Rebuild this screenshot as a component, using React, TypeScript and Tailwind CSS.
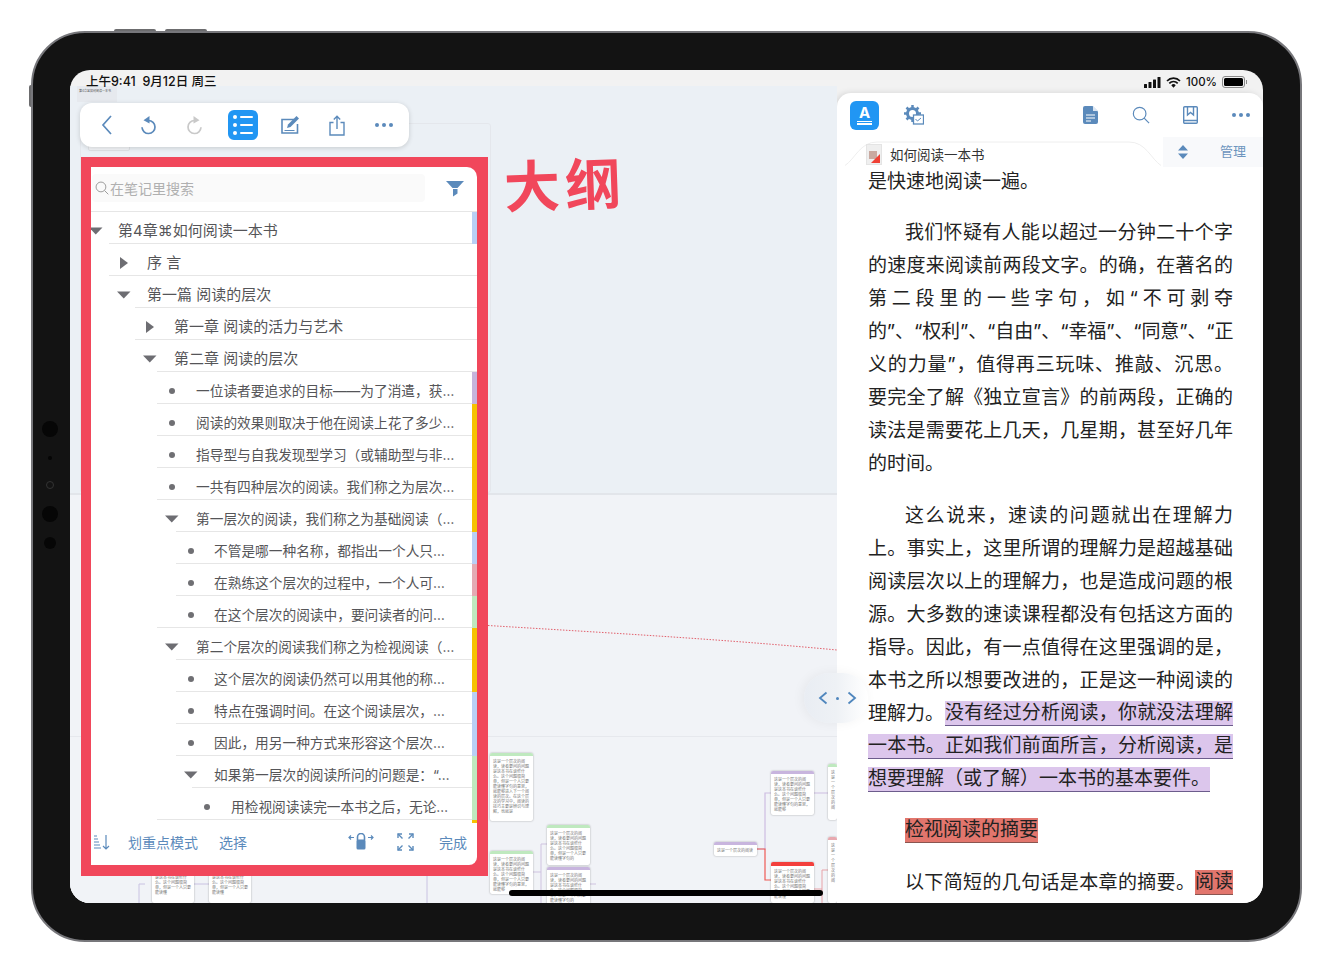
import React from 'react';
import { clsx } from 'clsx';

const BLUE = '#5b8abb';

type OutlineRow = {
  level: number;
  icon: 'down' | 'right' | 'dot';
  sep: string;
  bar?: string;
  text: string;
};

const indent: Record<number, string> = {
  0: 'ml-[-3px]',
  1: 'ml-[25px]',
  2: 'ml-[51px]',
  3: 'ml-[73px]',
  4: 'ml-[92px]',
  5: 'ml-[108px]',
};

const textStyle: Record<number, string> = {
  0: 'ml-[14px] text-[15px]',
  1: 'ml-[15px] text-[15px]',
  2: 'ml-[16px] text-[15px]',
  3: 'ml-[16px] text-[13.7px]',
  4: 'ml-[15px] text-[13.7px]',
  5: 'ml-[16px] text-[13.7px]',
};

const rows: OutlineRow[] = [
  { level: 0, icon: 'down', sep: 'left-[18px]', bar: 'bg-[#b9cff5]', text: '第4章⌘如何阅读一本书' },
  { level: 1, icon: 'right', sep: 'left-[18px]', text: '序 言' },
  { level: 1, icon: 'down', sep: 'left-[44px]', text: '第一篇 阅读的层次' },
  { level: 2, icon: 'right', sep: 'left-[44px]', text: '第一章 阅读的活力与艺术' },
  { level: 2, icon: 'down', sep: 'left-[66px]', text: '第二章 阅读的层次' },
  { level: 3, icon: 'dot', sep: 'left-[66px]', bar: 'bg-[#c6b4dc]', text: '一位读者要追求的目标——为了消遣，获…' },
  { level: 3, icon: 'dot', sep: 'left-[66px]', bar: 'bg-[#f6c200]', text: '阅读的效果则取决于他在阅读上花了多少…' },
  { level: 3, icon: 'dot', sep: 'left-[66px]', bar: 'bg-[#f6c200]', text: '指导型与自我发现型学习（或辅助型与非…' },
  { level: 3, icon: 'dot', sep: 'left-[66px]', bar: 'bg-[#f6c200]', text: '一共有四种层次的阅读。我们称之为层次…' },
  { level: 3, icon: 'down', sep: 'left-[85px]', bar: 'bg-[#f6c200]', text: '第一层次的阅读，我们称之为基础阅读（…' },
  { level: 4, icon: 'dot', sep: 'left-[85px]', bar: 'bg-[#b9cff5]', text: '不管是哪一种名称，都指出一个人只…' },
  { level: 4, icon: 'dot', sep: 'left-[85px]', bar: 'bg-[#e4aab3]', text: '在熟练这个层次的过程中，一个人可…' },
  { level: 4, icon: 'dot', sep: 'left-[66px]', bar: 'bg-[#bfe9bf]', text: '在这个层次的阅读中，要问读者的问…' },
  { level: 3, icon: 'down', sep: 'left-[85px]', bar: 'bg-[#f6c200]', text: '第二个层次的阅读我们称之为检视阅读（…' },
  { level: 4, icon: 'dot', sep: 'left-[85px]', bar: 'bg-[#f6c200]', text: '这个层次的阅读仍然可以用其他的称…' },
  { level: 4, icon: 'dot', sep: 'left-[85px]', bar: 'bg-[#b9cff5]', text: '特点在强调时间。在这个阅读层次，…' },
  { level: 4, icon: 'dot', sep: 'left-[85px]', bar: 'bg-[#b9cff5]', text: '因此，用另一种方式来形容这个层次…' },
  { level: 4, icon: 'down', sep: 'left-[101px]', bar: 'bg-[#bfe9bf]', text: '如果第一层次的阅读所问的问题是：“…' },
  { level: 5, icon: 'dot', sep: 'left-[66px]', bar: 'bg-[#bfe9bf]', text: '用检视阅读读完一本书之后，无论…' },
];

function RowIcon({ icon }: { icon: OutlineRow['icon'] }) {
  if (icon === 'dot') return <span className="h-[6px] w-[6px] rounded-full bg-[#6f6f73]" />;
  return (
    <svg width="14" height="14" viewBox="0 0 14 14">
      {icon === 'down' ? <path d="M0 3.500h13.500L6.750 10.500z" fill="#6d6d72" /> : <path d="M3 1l8 6-8 6z" fill="#6d6d72" />}
    </svg>
  );
}

function Outline() {
  return (
    <div>
      {rows.map((row) => (
        <div key={row.text} className="relative flex h-8 items-center overflow-hidden pt-[6px]">
          <span className={clsx('flex h-4 w-4 shrink-0 items-center justify-center', indent[row.level])}>
            <RowIcon icon={row.icon} />
          </span>
          <span className={clsx('whitespace-nowrap text-[#555558]', textStyle[row.level])}>{row.text}</span>
          <span className={clsx('absolute bottom-0 right-0 h-px bg-[#e6e6e6]', row.sep)} />
          {row.bar && <span className={clsx('absolute bottom-0 right-0 top-0 w-[5px]', row.bar)} />}
        </div>
      ))}
    </div>
  );
}

function Toolbar() {
  return (
    <div className="absolute left-[10px] top-[17px] flex h-[44px] w-[329px] items-center rounded-[12px] bg-white shadow-[0_1px_5px_rgba(0,0,0,0.16)]">
      <div className="flex w-[47px] justify-center pl-[6px]">
        <svg width="14" height="22" viewBox="0 0 14 22" fill="none" stroke={BLUE} strokeWidth="1.700">
          <path d="M11 2L3 11l8 9" />
        </svg>
      </div>
      <div className="flex w-[42px] justify-center">
        <UndoIcon color={BLUE} />
      </div>
      <div className="flex w-[52px] justify-center">
        <span className="-scale-x-100">
          <UndoIcon color="#c9c9c9" />
        </span>
      </div>
      <div className="ml-[7px] flex h-[30px] w-[30px] flex-col items-center justify-center gap-[4px] rounded-[6px] bg-[#2196f3]">
        {[0, 1, 2].map((i) => (
          <div key={i} className="flex items-center gap-[3px]">
            <span className="h-[4px] w-[4px] rounded-full bg-white" />
            <span className="h-[2px] w-[13px] rounded-full bg-white" />
          </div>
        ))}
      </div>
      <div className="ml-[18px] flex w-[27px] justify-center">
        <svg width="20" height="20" viewBox="0 0 20 20" fill="none">
          <path d="M14 4.500H2v13.500h15.500V9" stroke={BLUE} strokeWidth="1.600" />
          <path d="M16.500 1l2.500 2.500-8.500 8.500-3.500 1 1-3.500z" fill={BLUE} />
          <path d="M4.500 15.500h10" stroke={BLUE} strokeWidth="1.200" />
        </svg>
      </div>
      <div className="ml-[20px] flex w-[27px] justify-center">
        <svg width="18" height="21" viewBox="0 0 18 21" fill="none" stroke={BLUE} strokeWidth="1.400">
          <path d="M5.500 7.500H2v12.500h14V7.500h-3.500" />
          <path d="M9 14V1.500M5.800 4.500L9 1.300l3.200 3.200" />
        </svg>
      </div>
      <div className="ml-[20px] flex w-[27px] items-center justify-center gap-[3px]">
        <Dots />
      </div>
    </div>
  );
}

function UndoIcon({ color }: { color: string }) {
  return (
    <svg width="18" height="20" viewBox="0 0 18 20" fill="none" className="block">
      <path d="M9.500 5.500a6.500 6.500 0 1 1-6.500 6.800" stroke={color} strokeWidth="1.700" />
      <path d="M10.500 1L4.500 5.300l6 3.200z" fill={color} />
    </svg>
  );
}

function Dots() {
  return (
    <>
      <span className="h-[4px] w-[4px] rounded-full bg-[#5b8abb]" />
      <span className="h-[4px] w-[4px] rounded-full bg-[#5b8abb]" />
      <span className="h-[4px] w-[4px] rounded-full bg-[#5b8abb]" />
    </>
  );
}

function SearchGlyph({ size, color, width }: { size: number; color: string; width: number }) {
  return (
    <svg width={size} height={size} viewBox="0 0 20 20" fill="none" stroke={color} strokeWidth={width}>
      <circle cx="8.500" cy="8.500" r="7" />
      <path d="M13.500 13.500L19 19" />
    </svg>
  );
}

function OutlinePanel() {
  return (
    <div className="absolute left-[11px] top-[71px] h-[719px] w-[407px] border-[10px] border-b-[11px] border-r-[11px] border-[#f1475b] bg-[#f1475b]">
      <div className="flex h-full flex-col overflow-hidden rounded-br-[8px] rounded-tr-[10px] bg-white">
        <div className="flex h-[45px] shrink-0 items-center border-b border-[#e6e6e6] pb-[2px]">
          <div className="ml-px flex h-[28px] w-[333px] items-center rounded-[4px] bg-[#fafafa] pl-[3px]">
            <SearchGlyph size={14} color="#9a9a9a" width={1.400} />
            <span className="ml-[1px] text-[14px] text-[#b0b0b0]">在笔记里搜索</span>
          </div>
          <svg width="18" height="17" viewBox="0 0 18 17" className="ml-[21px]">
            <path d="M0 1h18l-6.500 7H6.500z" fill={BLUE} />
            <path d="M7 9h4.500v4.500L7 16.500z" fill={BLUE} />
          </svg>
        </div>
        <Outline />
        <div className="ml-auto h-[3px] w-[5px] bg-[#f6c200]" />
        <div className="flex flex-1 items-center pb-[4px] text-[14px] text-[#5b8abb]">
          <svg width="18" height="18" viewBox="0 0 18 18" fill="none" stroke={BLUE} strokeWidth="1.200" className="ml-[2px]">
            <path d="M1 3h3M1 6h4M1 9h5M1 12h6M1 15h7" />
            <path d="M13 2v14M10 13l3 3 3-3" />
          </svg>
          <span className="ml-[17px]">划重点模式</span>
          <span className="ml-[21px]">选择</span>
          <svg width="26" height="18" viewBox="0 0 26 18" className="ml-[101px]" fill="none" stroke={BLUE} strokeWidth="1.200">
            <path d="M6 4.500H1M3 2.500l-2 2 2 2M20 4.500h5M23 2.500l2 2-2 2" />
            <path d="M9.500 7V4a3.500 3.500 0 0 1 7 0v3" strokeWidth="1.600" />
            <rect x="8.500" y="6.500" width="9" height="10" rx="1.500" fill={BLUE} stroke="none" />
          </svg>
          <svg width="17" height="18" viewBox="0 0 17 18" className="ml-[23px]" fill="none" stroke={BLUE} strokeWidth="1.400">
            <path d="M1 1l4.500 4.500M16 1l-4.500 4.500M1 17l4.500-4.500M16 17l-4.500-4.500" />
            <path d="M1 5V1h4M12 1h4v4M1 13v4h4M12 17h4v-4" />
          </svg>
          <span className="ml-[25px]">完成</span>
        </div>
      </div>
    </div>
  );
}

const tinyText =
  '这是一个层次的阅读，读者要问的问题是这本书在谈些什么。这个问题很简单，但是一个人只要能读懂字句的意思，就能够进入下一个阅读的层次。在这个层次的学习中，阅读的技巧主要是辨识与理解，也就是最基础的阅读。';

function MapCard({ className, top, chars }: { className: string; top: string; chars: number }) {
  return (
    <div className={clsx('absolute overflow-hidden rounded-[2px] bg-white shadow-[0_0_2px_rgba(0,0,0,0.35)]', className)}>
      <div className={clsx('w-full', top)} />
      <p className="px-[3px] pt-[3px] text-[4px] leading-[5px] text-[#777]">{tinyText.slice(0, chars)}</p>
    </div>
  );
}

function MindMap() {
  return (
    <>
      <div className="absolute left-[10px] top-[37px] h-[370px] w-[411px] rounded-[3px] border border-[#e4e7ec]" />
      <div className="absolute left-[7px] top-0 h-[16px] w-[40px] bg-[#e6e9ee] pl-[2px] pt-[3px] text-[3px] leading-[5px] text-[#555]">第4章⌘如何阅读一本书</div>
      <div className="absolute left-[18px] top-[51px] h-[14px] w-[42px] rounded-[2px] border border-[#dfe2e6] bg-[#f2f4f7]" />
      <div className="absolute inset-x-0 top-[407px] h-[2px] bg-[#e2e5ea]" />
      <div className="absolute inset-x-0 bottom-0 top-[409px] bg-[#f1f3f7]" />
      <div className="absolute inset-x-0 top-[650px] h-px bg-[#e6e8ed]" />
      <svg className="absolute inset-0 h-full w-full" fill="none">
        <path d="M418 539.500C540 547 650 553 767 564" stroke="#e2606c" strokeWidth="1" strokeDasharray="1.500 1.500" />
        <path d="M462 786h9v-28h6M471 786v31M520 798h6" stroke="#cfc3e0" strokeWidth="1" />
        <path d="M686 763h9v-56h6M743 707h15" stroke="#cdbde2" strokeWidth="1.200" />
        <path d="M686 763h9v31h6" stroke="#ee5a55" strokeWidth="1.200" />
        <path d="M743 803h9v-19h6M752 803v14" stroke="#e8a3a8" strokeWidth="1" />
        <path d="M75 798h-6v19M123 798h16M357 780v37" stroke="#c9c2e2" strokeWidth="1" />
      </svg>
      <MapCard className="left-[420px] top-[667px] h-[68px] w-[43px]" top="h-[3px] bg-[#bfe9bf]" chars={92} />
      <MapCard className="left-[477px] top-[739px] h-[40px] w-[43px]" top="h-[3px] bg-[#bfe9bf]" chars={48} />
      <MapCard className="left-[420px] top-[765px] h-[43px] w-[43px]" top="h-[3px] bg-[#bfe9bf]" chars={54} />
      <MapCard className="left-[477px] top-[781px] h-[40px] w-[43px]" top="h-[3px] bg-[#c8b5de]" chars={48} />
      <MapCard className="left-[644px] top-[756px] h-[14px] w-[43px]" top="h-[3px] bg-[#c8b5de]" chars={9} />
      <MapCard className="left-[701px] top-[685px] h-[44px] w-[43px]" top="h-[3px] bg-[#c8b5de]" chars={54} />
      <MapCard className="left-[758px] top-[678px] h-[56px] w-[9px]" top="h-[3px] bg-[#bfe9bf]" chars={8} />
      <MapCard className="left-[701px] top-[776px] h-[41px] w-[43px]" top="h-[4px] bg-[#f33f3c]" chars={45} />
      <MapCard className="left-[758px] top-[751px] h-[66px] w-[9px]" top="h-[3px] bg-[#e8a9b0]" chars={8} />
      <MapCard className="left-[82px] top-[776px] h-[41px] w-[42px]" top="h-0" chars={45} />
      <MapCard className="left-[139px] top-[776px] h-[41px] w-[42px]" top="h-0" chars={45} />
    </>
  );
}

function ReaderHeader() {
  return (
    <div className="flex h-[44px] shrink-0 items-center pl-[13px]">
      <div className="flex h-[29px] w-[29px] flex-col items-center justify-center rounded-[6px] bg-[#2196f3]">
        <span className="text-[15px] font-bold leading-[14px] text-white">A</span>
        <span className="mt-px h-[1.500px] w-[15px] bg-white" />
        <span className="mt-px h-[1.500px] w-[15px] bg-white" />
      </div>
      <svg width="20" height="20" viewBox="0 0 20 20" className="ml-[25px]" fill="none">
        <circle cx="8.500" cy="8.500" r="5" stroke={BLUE} strokeWidth="3" />
        <path d="M8.500 0v3M8.500 14v3M0 8.500h3M14 8.500h3M2.500 2.500l2 2M12.500 12.500l2 2M14.500 2.500l-2 2M2.500 14.500l2-2" stroke={BLUE} strokeWidth="2.500" />
        <rect x="9.500" y="10" width="10" height="9" fill="white" stroke={BLUE} strokeWidth="1.300" />
        <path d="M11.500 14l2 2 3.500-3" stroke={BLUE} strokeWidth="1" />
      </svg>
      <svg width="15" height="18" viewBox="0 0 15 18" className="ml-[159px]">
        <path d="M2 0h7.500L15 5.500V16a2 2 0 0 1-2 2H2a2 2 0 0 1-2-2V2a2 2 0 0 1 2-2z" fill={BLUE} />
        <path d="M10 0l5 5h-5z" fill="#dce6f1" />
        <path d="M3 9h9M3 12h9M3 15h5" stroke="white" strokeWidth="1.200" />
      </svg>
      <span className="ml-[34px]">
        <SearchGlyph size={18} color={BLUE} width={1.300} />
      </span>
      <svg width="15" height="18" viewBox="0 0 15 18" className="ml-[33px]" fill="none" stroke={BLUE} strokeWidth="1.400">
        <rect x="0.700" y="0.700" width="13.600" height="16.600" rx="1" />
        <path d="M0.700 14.500h13.600M4.500 1v8l3-2.500 3 2.500V1" />
      </svg>
      <div className="ml-[34px] flex items-center gap-[3px]">
        <Dots />
      </div>
    </div>
  );
}

function ReaderTabs() {
  return (
    <div className="flex h-[28px] shrink-0">
      <div className="relative flex flex-1 items-start pl-[29px] pt-[7px]">
        <svg className="absolute left-[8px] top-[4px]" width="316" height="25" fill="none" stroke="#eeeeee">
          <path d="M0 24.500C10 18 15 1 32 1h252c17 0 22 17 32 23.500" />
        </svg>
        <div className="relative h-[21px] w-[16px] overflow-hidden border border-[#e4e4e4] bg-[#efefef]">
          <span className="absolute left-[2px] top-[6px] h-[8px] w-[8px] bg-[#c9a9a0]" />
          <span className="absolute bottom-[1px] right-[1px] h-0 w-0 border-b-[9px] border-l-[9px] border-b-[#ef4135] border-l-transparent" />
        </div>
        <span className="relative ml-[8px] mt-[2px] text-[13.500px] leading-[18px] text-[#333]">如何阅读一本书</span>
      </div>
      <div className="flex h-[30px] w-[100px] items-center bg-[#f8f9fb] pl-[15px]">
        <svg width="10" height="14" viewBox="0 0 10 14" fill={BLUE}>
          <path d="M5 0l5 5.500H0zM5 14L0 8.500h10z" />
        </svg>
        <span className="ml-[32px] text-[13px] text-[#6d95be]">管理</span>
      </div>
    </div>
  );
}

const firstParagraph = [
  { text: '的速度来阅读前两段文字。的确，在著名的', tight: false },
  { text: '第二段里的一些字句，如“不可剥夺', tight: false },
  { text: '的”、“权利”、“自由”、“幸福”、“同意”、“正', tight: true },
  { text: '义的力量”，值得再三玩味、推敲、沉思。', tight: false },
  { text: '要完全了解《独立宣言》的前两段，正确的', tight: false },
  { text: '读法是需要花上几天，几星期，甚至好几年', tight: false },
];

const secondParagraph = [
  '上。事实上，这里所谓的理解力是超越基础',
  '阅读层次以上的理解力，也是造成问题的根',
  '源。大多数的速读课程都没有包括这方面的',
  '指导。因此，有一点值得在这里强调的是，',
  '本书之所以想要改进的，正是这一种阅读的',
];

const just = 'text-justify [text-align-last:justify]';
const line = 'flex h-[33px] shrink-0 items-center whitespace-nowrap';
const purple = 'h-[25px] border-b border-[#6c5c8c] bg-[#dcc6ec] leading-[24px]';
const red = 'h-[25px] border-b border-[#8a5550] bg-[#e2766d] leading-[24px]';

function Reader() {
  return (
    <div className="flex-1 overflow-hidden pl-[31px] pr-[30px] text-[19px] leading-[33px] text-[#222]">
      <div className={line}>是快速地阅读一遍。</div>
      <div className="h-[18px]" />
      <div className={clsx(just, 'ml-[37px] h-[33px]')}>我们怀疑有人能以超过一分钟二十个字</div>
      {firstParagraph.map((t) => (
        <div key={t.text} className={clsx(just, 'h-[33px]', t.tight && 'tracking-[-0.6px]')}>{t.text}</div>
      ))}
      <div className={line}>的时间。</div>
      <div className="h-[19px]" />
      <div className={clsx(just, 'ml-[37px] h-[33px]')}>这么说来，速读的问题就出在理解力</div>
      {secondParagraph.map((t) => (
        <div key={t} className={clsx(just, 'h-[33px]')}>{t}</div>
      ))}
      <div className={line}>
        <span className="w-[77px] shrink-0">理解力。</span>
        <span className={clsx(purple, just, 'flex-1')}>没有经过分析阅读，你就没法理解</span>
      </div>
      <div className={line}>
        <span className={clsx(purple, just, 'flex-1')}>一本书。正如我们前面所言，分析阅读，是</span>
      </div>
      <div className={line}>
        <span className={purple}>想要理解（或了解）一本书的基本要件。</span>
      </div>
      <div className="h-[18px]" />
      <div className={clsx(line, 'pl-[37px]')}>
        <span className={red}>检视阅读的摘要</span>
      </div>
      <div className="h-[19px]" />
      <div className={clsx(line, 'pl-[37px]')}>
        <span className={clsx(just, 'flex-1')}>以下简短的几句话是本章的摘要。</span>
        <span className={red}>阅读</span>
      </div>
      <div className={line}>
        <span className={clsx(red, 'flex-1')} />
      </div>
    </div>
  );
}

function StatusBar() {
  return (
    <div className="relative z-10 flex h-[16px] shrink-0 items-start justify-between pl-[16px] pr-[16px] pt-[4px] text-[12.500px] font-medium leading-4 text-[#111]">
      <span>上午9:41&nbsp;&nbsp;9月12日 周三</span>
      <div className="flex items-center">
        <svg width="17" height="11" viewBox="0 0 17 11" fill="#111">
          <rect x="0" y="7" width="3" height="4" rx="0.500" />
          <rect x="4.500" y="5" width="3" height="6" rx="0.500" />
          <rect x="9" y="2.500" width="3" height="8.500" rx="0.500" />
          <rect x="13.500" y="0" width="3" height="11" rx="0.500" />
        </svg>
        <svg width="15" height="11" viewBox="0 0 15 11" className="ml-[5px]" fill="none" stroke="#111" strokeWidth="1.700">
          <path d="M1 4a9 9 0 0 1 13 0M3.300 6.300a5.800 5.800 0 0 1 8.400 0" />
          <path d="M5.300 8.200a3 3 0 0 1 4.400 0L7.500 10.700z" fill="#111" stroke="none" />
        </svg>
        <span className="ml-[5px] text-[11.500px]">100%</span>
        <div className="ml-[5px] flex h-[12px] w-[23px] items-center rounded-[3px] border border-[#8a8a8a] p-px">
          <span className="h-full w-full rounded-[1.500px] bg-black" />
        </div>
        <span className="ml-px h-[4px] w-[1px] bg-[#8a8a8a]" />
      </div>
    </div>
  );
}

export default function App() {
  return (
    <div className="h-[973px] w-full overflow-hidden bg-white pl-[31px] pt-[31px] font-['Inter','Noto_Sans_CJK_SC',sans-serif]" lang="zh-CN">
      <div className="relative flex h-[911px] w-[1271px] items-start rounded-[54px] border-2 border-[#77777b] bg-[#131313] pl-[37px] pt-[37px]">
        <span className="absolute left-[81px] top-[-4px] h-[2px] w-[42px] rounded-t-[2px] bg-[#6c6c6e]" />
        <span className="absolute left-[132px] top-[-4px] h-[2px] w-[42px] rounded-t-[2px] bg-[#6c6c6e]" />
        <span className="absolute left-[-4px] top-[52px] h-[22px] w-[2px] rounded-l-[2px] bg-[#6c6c6e]" />
        <span className="absolute left-[9px] top-[388px] h-[16px] w-[16px] rounded-full bg-[#060606]" />
        <span className="absolute left-[15px] top-[423px] h-[4px] w-[4px] rounded-full bg-[#050505]" />
        <span className="absolute left-[13px] top-[448px] h-[8px] w-[8px] rounded-full border border-[#333]" />
        <span className="absolute left-[9px] top-[473px] h-[16px] w-[16px] rounded-full bg-[#060606]" />
        <span className="absolute left-[11px] top-[504px] h-[12px] w-[12px] rounded-full bg-[#060606]" />

        <div className="relative flex h-[833px] w-[1193px] flex-col overflow-hidden rounded-[20px] bg-[#f2f2f2]">
          <StatusBar />
          <div className="flex min-h-0 flex-1">
            <div className="relative flex-1 overflow-hidden bg-[#ebf0f5]">
              <MindMap />
              <Toolbar />
              <OutlinePanel />
              <div className="absolute left-[434px] top-[66px] -rotate-2 text-[56px] font-bold leading-[68px] tracking-[5px] text-[#f1475b]">大纲</div>
            </div>
            <div className="mt-[7px] flex w-[426px] flex-col overflow-hidden rounded-t-[14px] bg-white shadow-[-2px_0_6px_rgba(0,0,0,0.12)]">
              <ReaderHeader />
              <ReaderTabs />
              <Reader />
            </div>
          </div>
          <div className="absolute left-[734px] top-[603px] flex h-[50px] w-[64px] items-center justify-center gap-[8px] rounded-full bg-gradient-to-r from-[#e9edf3] via-[#eef1f5] to-white/0 pl-[3px] shadow-[-2px_0_12px_rgba(0,0,0,0.05)]">
            <svg width="10" height="14" viewBox="0 0 10 14" fill="none" stroke="#4f86bd" strokeWidth="1.800">
              <path d="M8.500 1.500L2 7l6.500 5.500" />
            </svg>
            <span className="h-[3px] w-[3px] rounded-full bg-[#4f86bd]" />
            <svg width="10" height="14" viewBox="0 0 10 14" fill="none" stroke="#4f86bd" strokeWidth="1.800">
              <path d="M1.500 1.500L8 7l-6.500 5.500" />
            </svg>
          </div>
          <div className="absolute left-[439px] top-[820px] h-[6px] w-[314px] rounded-full bg-black" />
        </div>
      </div>
    </div>
  );
}
